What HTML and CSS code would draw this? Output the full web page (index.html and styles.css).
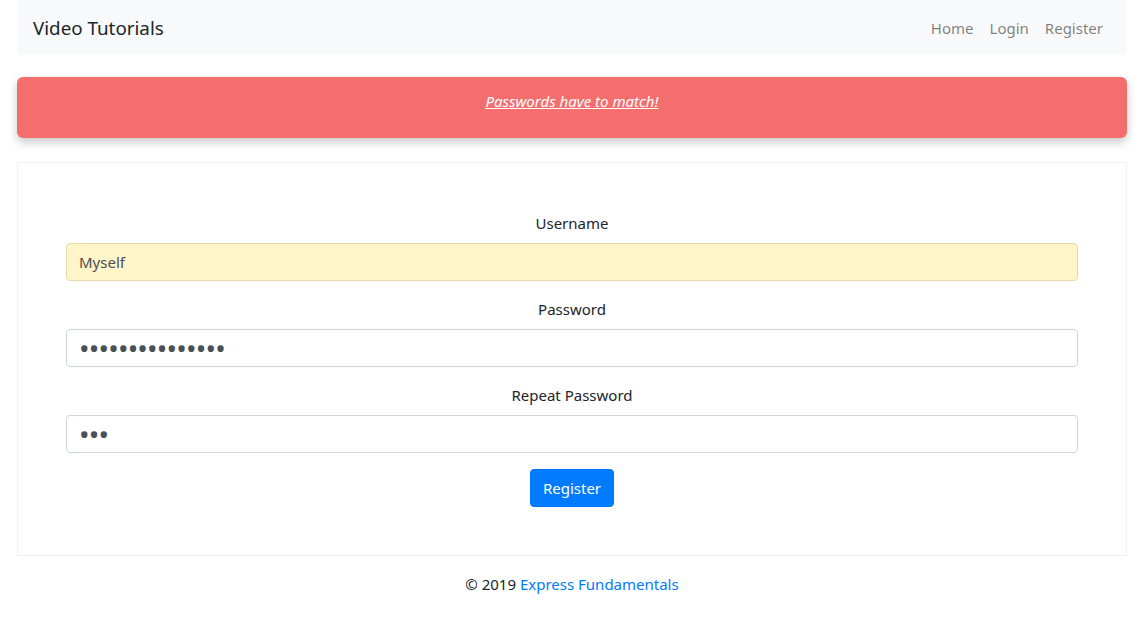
FILE: index.html
```html
<!DOCTYPE html>
<html lang="en">
<head>
<meta charset="utf-8">
<title>Video Tutorials</title>
<link rel="stylesheet" href="styles.css">
</head>
<body>
<div class="container">
  <nav class="navbar">
    <a class="brand" href="#">Video Tutorials</a>
    <ul class="nav">
      <li><a class="nav-link" href="#">Home</a></li>
      <li><a class="nav-link" href="#">Login</a></li>
      <li><a class="nav-link" href="#">Register</a></li>
    </ul>
  </nav>

  <div class="alert"><a class="alert-text" href="#">Passwords have to match!</a></div>

  <div class="card">
    <form class="form">
      <div class="form-group">
        <label class="label" for="username">Username</label>
        <input class="input input-autofill" id="username" type="text" value="Myself">
      </div>
      <div class="form-group">
        <label class="label" for="password">Password</label>
        <input class="input input-password" id="password" type="password" value="abcdefghijklmno">
      </div>
      <div class="form-group">
        <label class="label" for="repeat">Repeat Password</label>
        <input class="input input-password" id="repeat" type="password" value="abc">
      </div>
      <div class="actions">
        <button class="btn" type="button">Register</button>
      </div>
    </form>
  </div>

  <footer class="footer">© 2019 <a class="footer-link" href="#">Express Fundamentals</a></footer>
</div>
</body>
</html>
```

FILE: styles.css
```css
* { box-sizing: border-box; }
html, body { margin: 0; padding: 0; }
body {
  font-family: "Noto Sans", "Open Sans", sans-serif;
  font-size: 15px;
  line-height: 24px;
  color: #212529;
  background: #fff;
}
.container {
  width: 1110px;
  margin: 0 0 0 17px;
}
.navbar {
  height: 55px;
  background: #f8f9fa;
  display: flex;
  align-items: center;
  justify-content: space-between;
  padding: 1px 16px 0;
}
.brand {
  font-size: 18.8px;
  line-height: 30px;
  color: #212529;
  text-decoration: none;
}
.nav {
  list-style: none;
  margin: 0;
  padding: 0;
  display: flex;
}
.nav-link {
  display: block;
  padding: 8px;
  color: rgba(0, 0, 0, 0.5);
  text-decoration: none;
}
.alert {
  margin-top: 22px;
  height: 61px;
  padding: 12px 20px;
  background: #f46e6e;
  border-radius: 6px;
  box-shadow: 0 4px 10px rgba(0, 0, 0, 0.22);
  text-align: center;
}
.alert-text {
  color: #fff;
  font-style: italic;
  text-decoration: underline;
}
.card {
  margin-top: 24px;
  border: 1px solid #f1f1f1;
  padding: 48px;
}
.form-group {
  margin-bottom: 16px;
  display: flex;
  flex-direction: column;
}
.label {
  text-align: center;
  margin-bottom: 8px;
}
.input {
  height: 38px;
  padding: 6px 12px;
  font-family: inherit;
  font-size: 15px;
  line-height: 24px;
  color: #495057;
  background: #fff;
  border: 1px solid #ced4da;
  border-radius: 4px;
  outline: none;
}
.input-autofill {
  background: #fff5c8;
  border-color: #ead9a8;
}
.input-password {
  font-size: 28px;
  padding: 0 12px;
  line-height: 36px;
  letter-spacing: -0.8px;
}
.actions {
  display: flex;
  justify-content: center;
}
.btn {
  height: 38px;
  padding: 6px 12px;
  font-family: inherit;
  font-size: 15px;
  line-height: 24px;
  color: #fff;
  background: #007bff;
  border: 1px solid #007bff;
  border-radius: 4px;
}
.footer {
  margin-top: 16px;
  text-align: center;
}
.footer-link {
  color: #007bff;
  text-decoration: none;
}
```
